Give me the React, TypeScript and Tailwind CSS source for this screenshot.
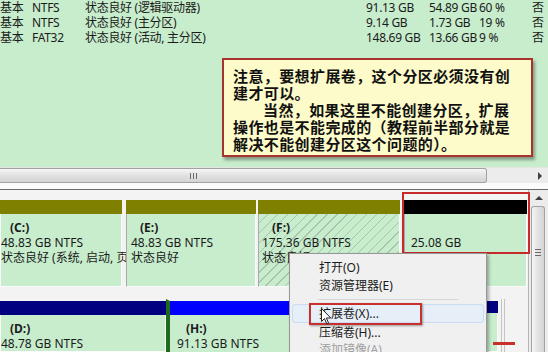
import React from 'react';

const rows = [
  ['基本', 'NTFS', '状态良好 (逻辑驱动器)', '91.13 GB', '54.89 GB', '60 %', '否'],
  ['基本', 'NTFS', '状态良好 (主分区)', '9.14 GB', '1.73 GB', '19 %', '否'],
  ['基本', 'FAT32', '状态良好 (活动, 主分区)', '148.69 GB', '13.66 GB', '9 %', '否'],
];

function Cursor() {
  return (
    <svg className="absolute left-[321px] top-[308px]" width="11" height="17" viewBox="0 0 11 17">
      <path d="M0.5 0.5 L0.5 13.5 L3.5 10.5 L5.8 16 L7.6 15.2 L5.4 10 L9.8 10 Z" fill="#fff" stroke="#222" strokeWidth="1" />
    </svg>
  );
}

function ContextMenu() {
  return (
    <div className="absolute left-[289px] top-[253px] h-[110px] w-[198px] border border-[#979797] bg-[#f0f0f0] pt-[5px] shadow-[2px_2px_3px_rgba(0,0,0,0.3)]">
      <div className="flex h-[18px] items-center pl-[29px]">打开(O)</div>
      <div className="flex h-[18px] items-center pl-[29px]">资源管理器(E)</div>
      <div className="flex h-[9px] items-center px-[28px]">
        <div className="h-px w-full bg-[#d7d7d7]" />
      </div>
      <div className="mx-[2px] flex h-[19px] items-center rounded-[3px] border border-[#c9dcf2] bg-[#e6eef8] pl-[26px]">
        扩展卷(X)...
      </div>
      <div className="flex h-[19px] items-center pl-[29px]">压缩卷(H)...</div>
      <div className="flex h-[16px] items-start pl-[29px] leading-[16px] text-[#a0a0a0]">添加镜像(A)...</div>
      <div className="absolute left-[19px] top-[49px] h-[22px] w-[113px] border-2 border-[#c8302c] shadow-[1px_1px_2px_rgba(0,0,0,0.35)]" />
    </div>
  );
}

export default function App() {
  return (
    <div className="relative h-[352px] w-[548px] overflow-hidden bg-[#f3f3f3] font-['Noto_Sans','Noto_Sans_CJK_SC',sans-serif] text-[12px] text-[#1b1b1b]">
      {/* volume list */}
      <div className="h-[167px] bg-[#c7edcc]">
        {rows.map((r, i) => (
          <div key={i} className="grid h-[15px] grid-cols-[32px_53px_281px_63px_50px_53px_1fr] leading-[15px] tracking-[-0.3px] whitespace-nowrap">
            {r.map((c, j) => (
              <span key={j}>{c}</span>
            ))}
          </div>
        ))}
        <div className="ml-[222px] mt-[13px] h-[99px] w-[311px] border-2 border-[#a8342e] bg-[#fdfbc9] pl-[9px] pt-[7px] font-['Noto_Sans_CJK_SC',sans-serif] text-[15px] font-bold leading-[17px] tracking-[0.4px] text-[#111] shadow-[2px_3px_3px_rgba(0,0,0,0.35)]">
          注意，要想扩展卷，这个分区必须没有创
          <br />
          建才可以。
          <br />
          <span className="pl-[30px]">当然，如果这里不能创建分区，扩展</span>
          <br />
          操作也是不能完成的（教程前半部分就是
          <br />
          解决不能创建分区这个问题的）。
        </div>
      </div>

      {/* horizontal scrollbar */}
      <div className="flex h-[16px] items-stretch border-t border-[#e4e4e4] bg-[#ececec]">
        <div className="relative flex w-[487px] items-center justify-center rounded-r-[3px] border border-l-0 border-[#a2a2a2] bg-gradient-to-b from-[#f6f6f6] via-[#e2e2e2] to-[#d4d4d4]">
          <div className="absolute left-[190px] top-[4px] flex gap-[2px]">
            <div className="h-[6px] w-px bg-[#6a6a6a]" />
            <div className="h-[6px] w-px bg-[#6a6a6a]" />
            <div className="h-[6px] w-px bg-[#6a6a6a]" />
          </div>
        </div>
        <div className="flex flex-1 items-center justify-end pr-[6px]">
          <div className="h-0 w-0 border-y-[4px] border-l-[4px] border-y-transparent border-l-[#404040]" />
        </div>
      </div>
      <div className="h-[6px] bg-[#fbfbfb]" />
      <div className="h-px bg-[#6b6b6b]" />

      {/* graphical view */}
      <div className="flex h-[162px]">
        <div className="flex w-[528px] flex-col pt-[10px]">
          <div className="flex h-[88px]">
            <div className="flex w-[122px] flex-col">
              <div className="h-[14px] bg-[#808000]" />
              <div className="flex-1 border border-t-0 border-[#fafafa] bg-[#c7edcc] pt-[6px] leading-[15px] whitespace-nowrap">
                <div className="pl-[9px] font-bold">(C:)</div>
                <div>48.83 GB NTFS</div>
                <div>状态良好 (系统, 启动, 页</div>
              </div>
            </div>
            <div className="ml-[4px] flex w-[130px] flex-col">
              <div className="h-[14px] bg-[#808000]" />
              <div className="flex-1 border border-t-0 border-l-[#a9a9a9] border-r-[#fafafa] border-b-[#fafafa] bg-[#c7edcc] pl-[4px] pt-[6px] leading-[15px] whitespace-nowrap">
                <div className="pl-[9px] font-bold">(E:)</div>
                <div>48.83 GB NTFS</div>
                <div>状态良好</div>
              </div>
            </div>
            <div className="ml-[2px] flex w-[142px] flex-col">
              <div className="h-[14px] bg-[#808000]" />
              <div className="flex-1 border border-t-0 border-l-[#a9a9a9] border-r-[#fafafa] border-b-[#fafafa] bg-[repeating-linear-gradient(135deg,#c7edcc_0px,#c7edcc_6px,#a9c4ad_6px,#a9c4ad_7px)] pl-[3px] pt-[6px] leading-[15px] whitespace-nowrap">
                <div className="pl-[10px] font-bold">(F:)</div>
                <div>175.36 GB NTFS</div>
                <div>状态良好</div>
              </div>
            </div>
            <div className="ml-[4px] flex w-[123px] flex-col">
              <div className="h-[14px] bg-black" />
              <div className="flex-1 border border-t-0 border-l-[#a9a9a9] border-r-[#fafafa] border-b-[#fafafa] bg-[#c7edcc] pl-[6px] pt-[21px] leading-[15px]">
                25.08 GB
              </div>
            </div>
          </div>

          <div className="mt-[12px] flex flex-1">
            <div className="flex w-[166px] flex-col pt-[2px]">
              <div className="h-[14px] bg-[#000080]" />
              <div className="flex-1 border border-t-0 border-[#fafafa] bg-[#c7edcc] pt-[6px] leading-[15px] whitespace-nowrap">
                <div className="pl-[9px] font-bold">(D:)</div>
                <div>48.78 GB NTFS</div>
              </div>
            </div>
            <div className="flex w-[234px] flex-col border-l-[4px] border-t-[2px] border-l-[#1e6b1e] border-t-[#f3f3f3]">
              <div className="h-[14px] bg-[#0000ff]" />
              <div className="flex-1 bg-[#c7edcc] pl-[7px] pt-[6px] leading-[15px] whitespace-nowrap">
                <div className="pl-[9px] font-bold">(H:)</div>
                <div>91.13 GB NTFS</div>
              </div>
            </div>
            <div className="ml-[2px] flex w-[96px] flex-col pt-[2px]">
              <div className="h-[12px] bg-[#000080]" />
              <div className="flex-1 border border-t-0 border-[#fafafa] bg-[#c7edcc]" />
            </div>
            <div className="ml-[3px] w-[4px] border-x border-[#c4c4c4]" />
          </div>
        </div>

        {/* vertical scrollbar */}
        <div className="flex w-[20px] flex-col border-l border-[#b5b5b5] bg-[#ececec]">
          <div className="flex h-[16px] items-center justify-center">
            <div className="h-0 w-0 border-x-[4px] border-b-[4px] border-x-transparent border-b-[#404040]" />
          </div>
          <div className="ml-[2px] mr-[3px] flex flex-1 items-center justify-center rounded-t-[3px] border border-b-0 border-[#a2a2a2] bg-gradient-to-r from-[#f6f6f6] via-[#e2e2e2] to-[#d4d4d4]">
            <div className="-mt-[55px] flex flex-col gap-[2px]">
              <div className="h-px w-[6px] bg-[#6a6a6a]" />
              <div className="h-px w-[6px] bg-[#6a6a6a]" />
              <div className="h-px w-[6px] bg-[#6a6a6a]" />
            </div>
          </div>
        </div>
      </div>

      {/* annotations and overlays */}
      <div className="absolute left-[402px] top-[192px] h-[62px] w-[128px] border-2 border-[#c62a2a]" />
      <ContextMenu />
      <div className="absolute left-[493px] top-[342px] h-[3px] w-[22px] bg-[#c8302c]" />
      <Cursor />
    </div>
  );
}
